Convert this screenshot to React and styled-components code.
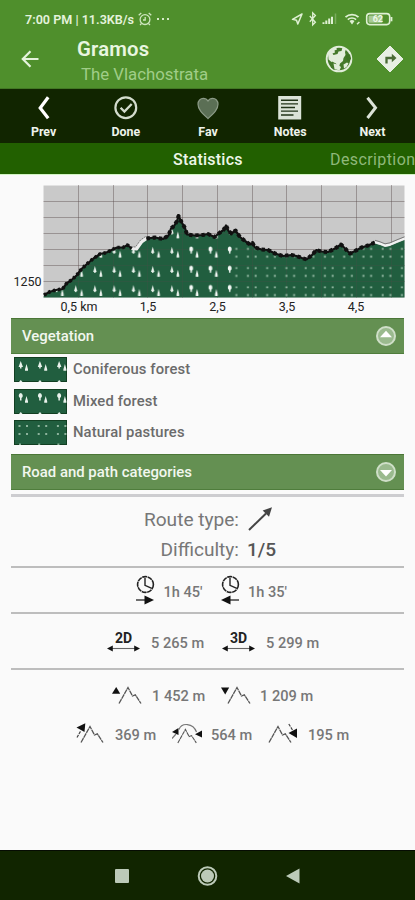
import React from 'react';
import styled, { createGlobalStyle } from 'styled-components';

const GRID_X = [78.5, 113.5, 147.5, 182.5, 217.5, 252.5, 286.5, 321.5, 356.5, 391.5];
const GRID_Y = [201.5, 217.5, 233.5, 249.5, 265.5, 281.5];
const KM_LABELS = [[79, '0,5 km'], [148, '1,5'], [217.5, '2,5'], [287, '3,5'], [356, '4,5']];

const START = '44,295 50,291.7 56,290 62.5,289 66.5,283.5 71.5,280 76.5,275.5 81.5,269 87.5,263.5 93.5,258.5 100,254 106.5,252.5 111.5,250 117,247.5 123,247.5 127.5,245 131.5,248.5';
const GAP = '131.5,248.5 136.5,249 141.5,242 146.5,238.5';
const MIDDLE = '146.5,238.5 155,237.5 163,239 168.5,235.5 171,228.5 174,226 177,221 178.5,216 181.5,222 185,228 187,234.5 195,235.5 203,235 208,234 214.5,237 220,232.5 223.5,230 226,225.5 228.5,231 231.5,233.5 235.5,230.5 240,237 245,241 250,244.5 252.5,243 255,247.5 261.5,249.5 268,250 275,253.5 283,256 291.5,255 296.5,256 302,258 306.5,259.5 312,255 316.5,250 321.5,251.5 328,252 335,248.5 341,244.5 345,248.5 350,253.5 355,251 361.5,247.5 368,245.5 375,242.5';
const END = '375,243.5 380,245 385,247 390,246 397,243 404.5,240';
const PROFILE = `${START} ${GAP} ${MIDDLE} ${END}`;

const Patterns = () => (
  <defs>
    <pattern id="conifer" x="73" y="283.5" width="19.25" height="19.2" patternUnits="userSpaceOnUse">
      <path d="M2.7 1.8L4.4 7.6H3.4v1H2v-1H1zM8.6 5.5L9.9 10.5v2H7.3v-2z" fill="#e9f2ec" />
    </pattern>
    <pattern id="mixed" x="188.5" y="283.5" width="19.25" height="19.2" patternUnits="userSpaceOnUse">
      <path d="M2.7 1.5a2 2.6 0 0 1 .7 5v2H2v-2A2 2.6 0 0 1 2.7 1.5zM8.6 5.5L9.9 10.5v2H7.3v-2z" fill="#f3f9f5" />
    </pattern>
    <pattern id="pasture" x="227" y="285" width="19.25" height="19.2" patternUnits="userSpaceOnUse">
      <path d="M.7 1.4h2v1.8h-2zM8.4 1.4h2v1.8h-2zM.7 9.2h2V11h-2zM8.4 9.2h2V11h-2z" fill="#94b9a3" />
    </pattern>
    <clipPath id="ground">
      <polygon points={`${PROFILE} 404.5,297.5 43.5,297.5`} />
    </clipPath>
  </defs>
);

const Grid = ({ opacity }) => (
  <g stroke="#574a49" strokeOpacity={opacity} strokeWidth="1">
    {GRID_X.map((x) => <line key={x} x1={x} x2={x} y1="185" y2="297.5" />)}
    {GRID_Y.map((y) => <line key={y} x1="43.5" x2="404.5" y1={y} y2={y} />)}
  </g>
);

const ElevationChart = () => (
  <Chart viewBox="0 175 415 143">
    <Patterns />
    <rect x="43.5" y="185.5" width="361" height="112" fill="#c9c9c9" />
    <Grid opacity={0.42} />
    <g clipPath="url(#ground)">
      <rect x="43" y="185" width="362" height="113" fill="#215e3f" />
      <Grid opacity={0.22} />
      <rect x="73" y="185" width="116" height="113" fill="url(#conifer)" />
      <rect x="54" y="283" width="19" height="15" fill="url(#conifer)" />
      <rect x="189" y="185" width="43" height="113" fill="url(#mixed)" />
      <rect x="233" y="246" width="172" height="52" fill="url(#pasture)" />
    </g>
    <g fill="none" strokeLinejoin="round">
      <polyline points={GAP} stroke="#eee" strokeWidth="3.2" />
      <polyline points={GAP} stroke="#777" strokeWidth="0.9" transform="translate(-1 -2)" strokeDasharray="2 1" />
      <polyline points={START} stroke="#111" strokeWidth="2.2" />
      <polyline points={START} stroke="#111" strokeWidth="3.6" strokeDasharray="2.4 2.6" />
      <polyline points={MIDDLE} stroke="#111" strokeWidth="2.2" />
      <polyline points={MIDDLE} stroke="#111" strokeWidth="4" strokeDasharray="3.4 2.8" />
      <polyline points={END} stroke="#f2f2f2" strokeWidth="2.2" transform="translate(0 -1.4)" />
      <polyline points={END} stroke="#777" strokeWidth="1" transform="translate(0 -3.2)" />
    </g>
    <g fontFamily="Roboto, sans-serif" fontSize="12.5" fill="#222">
      <text x="41.5" y="286" textAnchor="end">1250</text>
      {KM_LABELS.map(([x, label]) => <text key={label} x={x} y="311" textAnchor="middle">{label}</text>)}
    </g>
  </Chart>
);

const Swatch = ({ kind }) => (
  <SwatchSvg viewBox="0 0 53 25">
    <rect x="0.5" y="0.5" width="52" height="24" fill="#215e3f" stroke="#123f22" />
    {[0, 19.2, 38.4].map((x) => (
      <g key={x} transform={`translate(${x} 0)`} fill={kind === 'pasture' ? '#8db39c' : '#e9f2ec'}>
        {kind === 'conifer' && <path d="M6.7 4L9 10H7.5v1.6H6V10H4.6z" />}
        {kind === 'mixed' && <path d="M6.7 4a2.5 2.7 0 0 1 .8 5v2.6H6V9A2.5 2.7 0 0 1 6.7 4z" />}
        {kind === 'pasture' && <path d="M4.5 5h2v2h-2zM12 5h2v2h-2zM4.5 13h2v2h-2zM12 13h2v2h-2zM5 23.5h2V25H5z" />}
        {kind !== 'pasture' && <path d="M12.5 7L14 12.2v1.6h-3v-1.6zM5 25l1.8-2L8.5 25z" />}
      </g>
    ))}
  </SwatchSvg>
);

const StatusIcons = () => (
  <svg width="104" height="16" viewBox="291 11 104 16" fill="none" stroke="#dff0d3">
    <path d="M302 14L292.5 19.3l4 .9 1.3 3.8z" strokeWidth="1.5" strokeLinejoin="round" />
    <path d="M309.8 16l5.6 6.3-2.7 2.6V12.9l2.7 2.6-5.6 6.3" strokeWidth="1.3" />
    <path d="M323.5 24v-1.8M326.3 24v-3.6M329.2 24v-5.4M332 24v-7.2" strokeWidth="2" />
    <path d="M335.5 24V13.5" strokeWidth="1.5" opacity="0.3" />
    <path d="M345.5 17.2a9.5 9.5 0 0 1 13 0" strokeWidth="1.8" />
    <path d="M347.8 19.7a6 6 0 0 1 8.3 0" strokeWidth="1.6" />
    <path d="M349.5 21l2.5 3.5 2.5-3.5a4 4 0 0 0-5 0z" fill="#dff0d3" stroke="none" />
    <path d="M357 24.2l2.4-2.2" strokeWidth="1.5" />
    <rect x="366.7" y="13.6" width="23" height="11" rx="3" strokeWidth="1.6" />
    <path d="M391.5 17v4.3" strokeWidth="1.8" />
    <rect x="368.5" y="15.4" width="14" height="7.4" rx="1" fill="#a9cb94" stroke="none" />
    <text x="377.8" y="22.4" textAnchor="middle" fontFamily="Roboto" fontSize="9" fontWeight="700" fill="#eef8e8" stroke="none">62</text>
  </svg>
);

const Globe = () => (
  <svg width="28" height="28" viewBox="0 0 28 28" fill="#e2eddb">
    <circle cx="14" cy="14" r="12.3" fill="#44792a" stroke="#e2eddb" strokeWidth="2" />
    <path d="M3 8.5L7.5 3.5l3.5-1.5 1 2.5-2.5 1 .5 2L7.5 8.5l1 1.5 4-1 1-2.5 3-.5 1-3.5 3.5 1.5-1 3 .5 3-2 3-.5 3-3 2.5-1 3.5-2-1-1-2.5-4-1-3.5-3z" />
    <path d="M7 16.5l3 1.5 1.5 2.5-1 3-1.5 1.5-3-2.5-1-3z" fill="#44792a" />
    <path d="M8.5 18.5l4 1 3.5 2.5-1.5 3.5-5-1.5z" />
    <path d="M18.5 19.5l3.5-2 1.500 1-2 3.5-2.500 1.500z" />
    <path d="M20.5 11l2-2 2.500.5 1 4-1.500 3-2-1z" fill="#3d7423" />
  </svg>
);

const TurnSign = () => (
  <svg width="28" height="28" viewBox="0 0 28 28">
    <path d="M14 1l13 13-13 13L1 14z" fill="#e8efe3" stroke="#e8efe3" strokeLinejoin="round" />
    <path d="M10.5 18.5V13h6" fill="none" stroke="#4a6b35" strokeWidth="2.3" />
    <path d="M15.8 8.8L20.5 13l-4.7 4.2z" fill="#4a6b35" />
  </svg>
);

const TOOLS = [
  ['Prev', <path d="M18.2 3.2L10.2 14l8 10.3" stroke="#fff" strokeWidth="3.2" />],
  ['Done', (
    <g stroke="#d3dccd">
      <circle cx="13.8" cy="13.7" r="10.4" strokeWidth="2.2" />
      <path d="M8.600 13.7l3.8 3.8 7.3-7.5" strokeWidth="2.3" />
    </g>
  )],
  ['Fav', <path d="M14 24.6C8.5 19.4 4 15.5 4 10.2 4 6.8 6.4 4.4 9.3 4.4c1.9 0 3.7.9 4.7 2.6 1-1.7 2.8-2.6 4.7-2.6 2.9 0 5.3 2.4 5.3 5.8 0 5.3-4.5 9.2-10 14.4z" fill="#5b6f55" stroke="#8c9b87" strokeWidth="1.2" />],
  ['Notes', (
    <g>
      <path d="M2.2 2h23v23.5h-23z" fill="#dbe3d7" />
      <path d="M5 6.3h17M5 9.9h17M5 13.5h14M5 17.1h17M5 21h12.5" stroke="#223518" strokeWidth="1.4" />
    </g>
  )],
  ['Next', <path d="M9.500 3.800l8 10-8 10.200" stroke="#dbe3d7" strokeWidth="3" />],
];

const Clock = ({ back }) => (
  <svg width="22" height="32" viewBox="0 0 22 32" fill="none" stroke="#222">
    <circle cx="11.5" cy="9.5" r="7.9" strokeWidth="1.6" strokeDasharray="5 .6" />
    <path d="M11 3v7.4l6.8 3" strokeWidth="1.4" />
    <g transform={back ? 'matrix(-1 0 0 1 22 0)' : undefined}>
      <path d="M2 25h10" strokeWidth="1.3" />
      <path d="M10.5 20.6L20 25l-9.5 4.4z" fill="#111" stroke="none" />
    </g>
  </svg>
);

const Dimension = ({ label }) => (
  <DimensionBox>
    {label}
    <svg width="33" height="7" viewBox="0 0 33 7">
      <path d="M4 3.5h25" stroke="#666" strokeWidth="1.1" />
      <path d="M0 3.5L5.8.4v6.2zM33 3.5L27.2.4v6.2z" fill="#111" />
    </svg>
  </DimensionBox>
);

const MARKS = {
  up: <path d="M0 9.7L4.2 3l4 6.7z" />,
  down: <path d="M0 3.5h8.2l-4 7z" />,
  low: (
    <g>
      <path d="M.5 4.5L9.3.3 8.5 9z" />
      <path d="M1 14.5L5 7.5" stroke="#444" strokeWidth="1.2" strokeDasharray="3 1" />
    </g>
  ),
  mid: (
    <g>
      <path d="M0 9L6.5 5v7zM30 14.5l-7-3.3 7-3.7z" />
      <path d="M7 6.500C9.500-.5 21-.5 24.500 9M0 15.500L4 11" stroke="#777" strokeWidth="1.2" fill="none" />
    </g>
  ),
  high: (
    <g>
      <path d="M20.5 10l8.5-4.5V15z" />
      <path d="M20.8 1l4 6.5" stroke="#444" strokeWidth="1.2" strokeDasharray="3 1" />
    </g>
  ),
};

const Mountain = ({ mark, x = 6, scale = 1 }) => (
  <svg width="30" height="22" viewBox="0 0 30 22" fill="#111">
    <g transform={`translate(${x} ${22 - 22 * scale}) scale(${scale})`}>
      <path d="M1 19.5L10 3.5l4.5 8.5 2.8-1.2 5.7 8.7" fill="none" stroke="#555" strokeWidth="1.3" strokeDasharray="5 .5" />
    </g>
    {MARKS[mark]}
  </svg>
);

const App = () => {
  return (
    <Screen>
      <GlobalStyle />
      <StatusBar>
        <span>7:00 PM | 11.3KB/s</span>
        <svg width="14" height="14" viewBox="0 0 14 14" fill="none" stroke="#cfe6c0" strokeWidth="1.3">
          <circle cx="7" cy="7.6" r="4.9" />
          <path d="M.7 3.3L3.3 1M13.3 3.3L10.7 1M7.2 5v3H5M3.5 11.5L2 13M10.5 11.5L12 13" />
        </svg>
        <Dots>
          <i /><i /><i />
        </Dots>
        <StatusIcons />
      </StatusBar>
      <Header>
        <svg width="20" height="20" viewBox="0 0 20 20" fill="none" stroke="#e5f3dc" strokeWidth="2.2">
          <path d="M17.5 10H2M9.5 2.3L1.8 10l7.7 7.7" />
        </svg>
        <Titles>
          <Title>Gramos</Title>
          <Subtitle>The Vlachostrata</Subtitle>
        </Titles>
        <Globe />
        <TurnSign />
      </Header>
      <Toolbar>
        {TOOLS.map(([label, icon]) => (
          <Tool key={label}>
            <svg width="28" height="28" viewBox="0 0 28 28" fill="none">{icon}</svg>
            {label}
          </Tool>
        ))}
      </Toolbar>
      <Tabs>
        <Tab $active>Statistics</Tab>
        <Tab>Description</Tab>
      </Tabs>
      <ElevationChart />
      <Content>
        <SectionBar>
          Vegetation
          <Toggle>
            <path d="M10 3.5l7.5 8h-15z" />
          </Toggle>
        </SectionBar>
        <Legend>
          <LegendRow><Swatch kind="conifer" />Coniferous forest</LegendRow>
          <LegendRow><Swatch kind="mixed" />Mixed forest</LegendRow>
          <LegendRow><Swatch kind="pasture" />Natural pastures</LegendRow>
        </Legend>
        <SectionBar>
          Road and path categories
          <Toggle>
            <path d="M10 15.5l7.5-8h-15z" />
          </Toggle>
        </SectionBar>
        <Facts>
          <Fact>
            Route type:
            <svg width="28" height="26" viewBox="0 0 28 26">
              <path d="M2 24L19 7.5" stroke="#444" strokeWidth="2" />
              <path d="M25 1.3l-3 9.5-6.3-6.3z" fill="#444" />
            </svg>
          </Fact>
          <Fact>
            Difficulty:
            <b>1/5</b>
          </Fact>
        </Facts>
        <StatRow $height={46} $left={123}>
          <Clock />
          <Value $width={63} $gap={7.5}>1h 45'</Value>
          <Clock back />
          <Value $gap={7}>1h 35'</Value>
        </StatRow>
        <StatRow $height={56} $left={96}>
          <Dimension label="2D" />
          <Value $width={82} $gap={11}>5 265 m</Value>
          <Dimension label="3D" />
          <Value $gap={11}>5 299 m</Value>
        </StatRow>
        <StatRow $height={51} $left={101}>
          <Mountain mark="up" />
          <Value $width={79} $gap={10}>1 452 m</Value>
          <Mountain mark="down" />
          <Value $gap={9}>1 209 m</Value>
        </StatRow>
        <StatRow $height={26} $left={65} $plain>
          <Mountain mark="low" x={4} />
          <Value $width={66} $gap={9}>369 m</Value>
          <Mountain mark="mid" x={5} scale={0.84} />
          <Value $width={66} $gap={9}>564 m</Value>
          <Mountain mark="high" x={0} />
          <Value $gap={10}>195 m</Value>
        </StatRow>
      </Content>
      <NavBar>
        <svg width="415" height="49" viewBox="0 0 415 49" fill="#bccab8">
          <rect x="115" y="18" width="14" height="14" rx="1" />
          <circle cx="207.5" cy="25" r="6.5" />
          <circle cx="207.5" cy="25" r="8.8" fill="none" stroke="#bccab8" strokeWidth="2" />
          <path d="M299.5 17.5v15L286 25z" />
        </svg>
      </NavBar>
    </Screen>
  );
};

const GlobalStyle = createGlobalStyle`
  body {
    margin: 0;
    font-family: Roboto, sans-serif;
  }

  svg {
    display: block;
    flex-shrink: 0;
  }
`;

const Screen = styled.div`
  display: flex;
  flex-direction: column;
  width: 415px;
  height: 900px;
  overflow: hidden;
  background: #fafafa;
`;

const StatusBar = styled.div`
  display: flex;
  align-items: center;
  box-sizing: border-box;
  height: 38px;
  padding: 0 20px 0 25px;
  background: #4f8f2c;
  color: #e5f3dc;
  font-size: 12.6px;
  font-weight: 600;

  > span {
    width: 113px;
    white-space: nowrap;
  }

  > svg:last-child {
    margin-left: auto;
  }
`;

const Dots = styled.div`
  display: flex;
  gap: 3px;
  margin-left: 5px;

  i {
    width: 2px;
    height: 2px;
    background: #d5eac7;
  }
`;

const Header = styled.div`
  display: flex;
  align-items: center;
  box-sizing: border-box;
  height: 51px;
  padding: 0 11px 9px 21px;
  background: #4f8f2c;
  border-bottom: 1px solid #427724;

  > svg:last-child {
    margin-left: 23px;
  }
`;

const Titles = styled.div`
  flex: 1;
  margin: 7px 0 0 36px;
`;

const Title = styled.div`
  color: #e9f6e0;
  font-size: 20.3px;
  font-weight: 600;
  letter-spacing: 0.2px;
  line-height: 24px;
`;

const Subtitle = styled.div`
  margin-left: 4px;
  color: #a0cd88;
  font-size: 16.8px;
  line-height: 26px;
`;

const Toolbar = styled.div`
  display: grid;
  grid-template-columns: repeat(5, 1fr);
  height: 54px;
  padding: 0 2px;
  background: #112500;
`;

const Tool = styled.div`
  display: flex;
  flex-direction: column;
  align-items: center;
  padding: 5px 0 0 1px;
  color: #eef3eb;
  font-size: 12.4px;
  font-weight: 700;
  line-height: 20px;
`;

const Tabs = styled.div`
  display: flex;
  box-sizing: border-box;
  height: 32px;
  padding-left: 173px;
  background: #226000;
  border-bottom: 1px solid #d3f5c4;
`;

const Tab = styled.div`
  flex-shrink: 0;
  width: 157px;
  color: ${({ $active }) => ($active ? '#eef7e8' : '#8fb87a')};
  font-size: 16px;
  font-weight: ${({ $active }) => ($active ? 500 : 400)};
  line-height: 34px;
  letter-spacing: ${({ $active }) => ($active ? 0.25 : 0.4)}px;
`;

const Chart = styled.svg`
  width: 415px;
  height: 143px;
`;

const Content = styled.div`
  flex: 1;
  padding: 0 11px;
`;

const SectionBar = styled.div`
  display: flex;
  align-items: center;
  justify-content: space-between;
  box-sizing: border-box;
  height: 36px;
  padding: 0 8px 0 11px;
  background: #649052;
  border-top: 1px solid #4b7637;
  border-bottom: 1px solid #4f7d3c;
  color: #f2f7ef;
  font-size: 14.9px;
  font-weight: 500;
`;

const Toggle = styled.svg.attrs({ viewBox: '0 0 20 20' })`
  box-sizing: border-box;
  width: 20px;
  height: 20px;
  border: 2px solid #cfdfc8;
  border-radius: 50%;
  background: #9aba8e;
  fill: #fff;
`;

const Legend = styled.div`
  display: flex;
  flex-direction: column;
  gap: 6.5px;
  padding: 3px 3px 9px;
`;

const LegendRow = styled.div`
  display: flex;
  align-items: center;
  gap: 6px;
  height: 25px;
  color: #6b6b6b;
  font-size: 14.8px;
  font-weight: 500;
  letter-spacing: 0.12px;
  line-height: 27px;
`;

const SwatchSvg = styled.svg`
  width: 53px;
  height: 25px;
`;

const Facts = styled.div`
  margin-top: 4px;
  padding-top: 7px;
  height: 62px;
  border-top: 3px solid #cdcdd0;
`;

const Fact = styled.div`
  display: grid;
  grid-template-columns: 228px 1fr;
  column-gap: 8px;
  align-items: center;
  height: 30px;
  color: #777;
  font-size: 19.1px;
  white-space: nowrap;
  text-align: right;

  b {
    color: #555;
    font-weight: 500;
    text-align: left;
  }
`;

const StatRow = styled.div`
  display: flex;
  align-items: center;
  box-sizing: border-box;
  height: ${({ $height }) => $height}px;
  padding: ${({ $plain }) => ($plain ? 3 : 1)}px 0 0 ${({ $left }) => $left}px;
  border-top: ${({ $plain }) => ($plain ? 'none' : '2px solid #bdbdbd')};
`;

const Value = styled.div`
  box-sizing: border-box;
  width: ${({ $width }) => ($width ? `${$width}px` : 'auto')};
  padding: 2px 0 0 ${({ $gap }) => $gap}px;
  color: #777;
  font-size: 14.6px;
  font-weight: 500;
  white-space: nowrap;
`;

const DimensionBox = styled.div`
  display: flex;
  flex-direction: column;
  align-items: center;
  width: 33px;
  color: #222;
  font-size: 14px;
  font-weight: 700;
  line-height: 14px;
`;

const NavBar = styled.div`
  height: 49px;
  background: #112500;
  border-top: 1px solid #060c02;
`;

export default App;
